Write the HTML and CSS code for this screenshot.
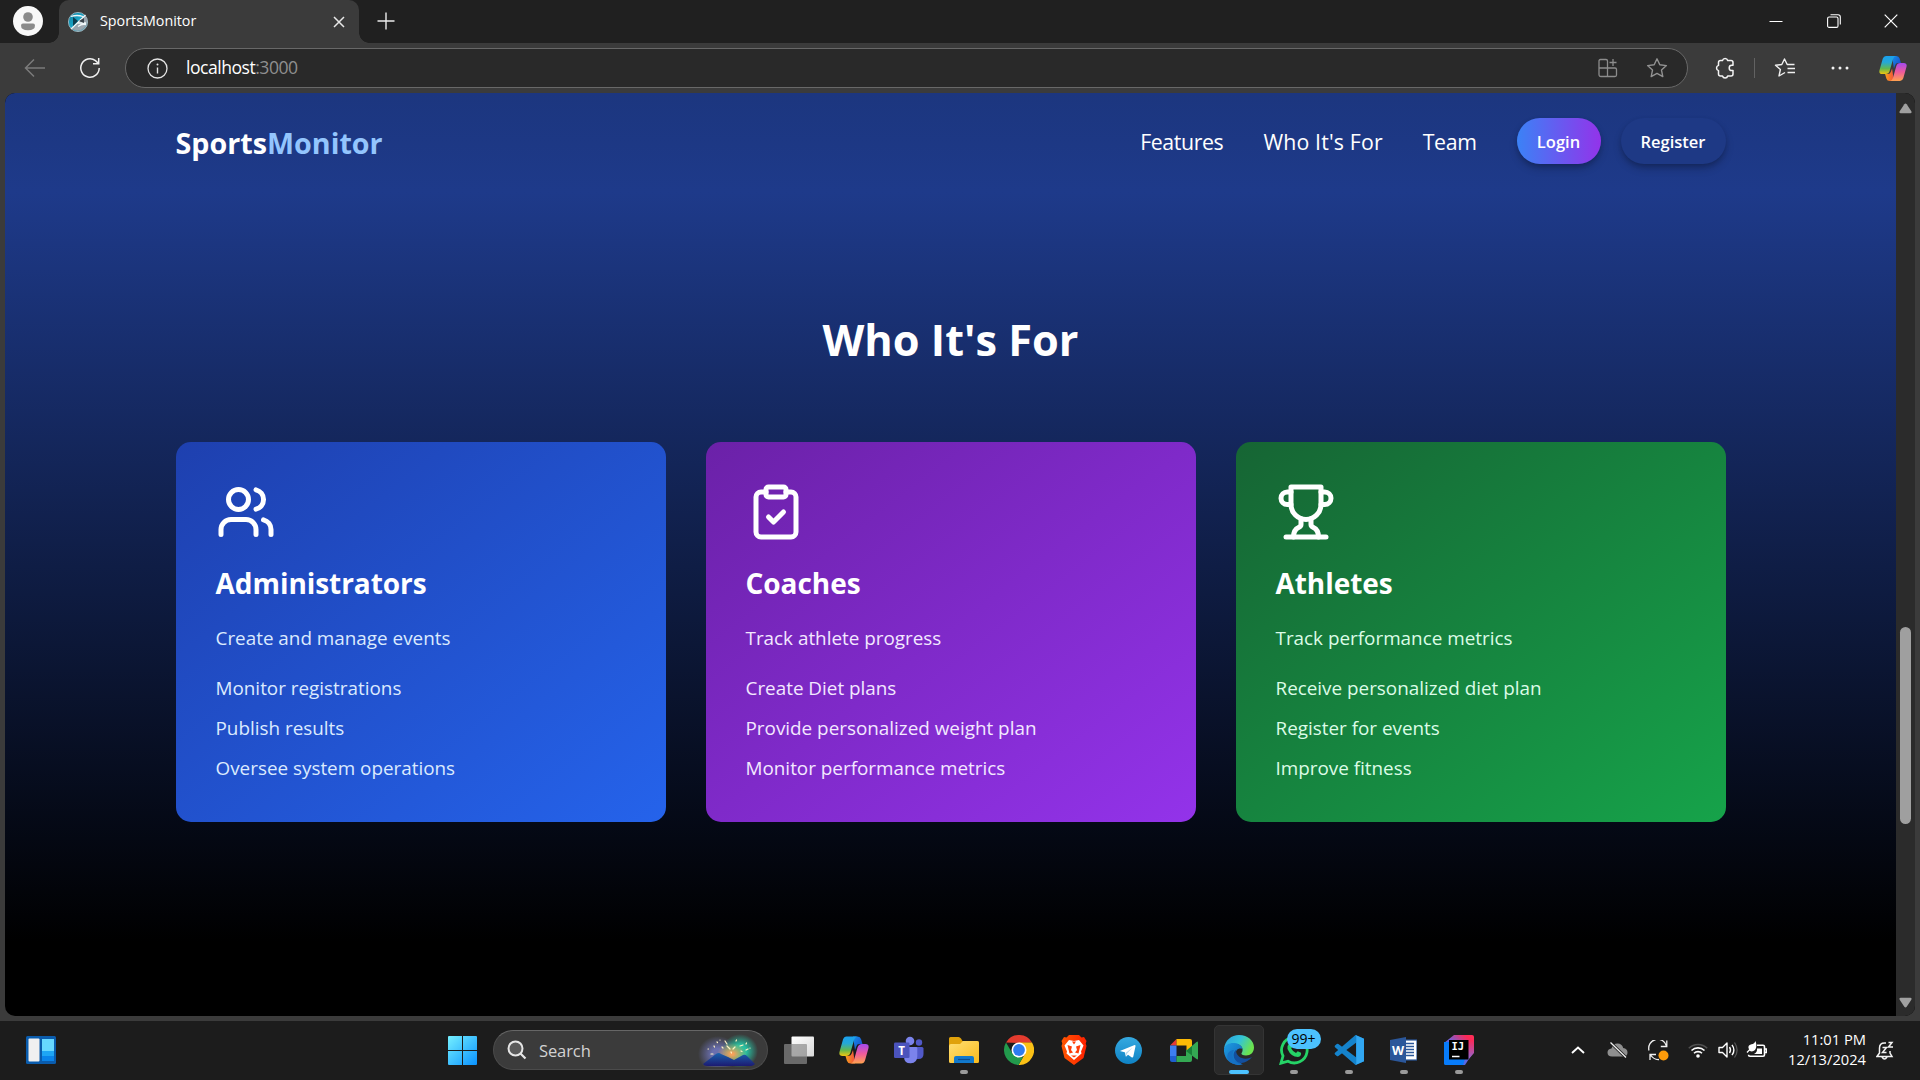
FILE: index.html
```html
<!DOCTYPE html>
<html lang="en">
<head>
<meta charset="utf-8">
<title>SportsMonitor</title>
<link rel="stylesheet" href="styles.css">
</head>
<body>
<svg class="defs" width="0" height="0" aria-hidden="true">
  <defs>
    <linearGradient id="cpA" x1="0" y1="0" x2="0" y2="1"><stop offset="0" stop-color="#1aa0ee"/><stop offset=".35" stop-color="#24a8d8"/><stop offset=".7" stop-color="#62b84e"/><stop offset="1" stop-color="#f2c70f"/></linearGradient>
    <linearGradient id="cpB" x1="0" y1="0" x2="0" y2="1"><stop offset="0" stop-color="#a349f0"/><stop offset=".5" stop-color="#ee5a9c"/><stop offset="1" stop-color="#ffa34e"/></linearGradient>
    <linearGradient id="cpC" x1="0" y1="0" x2="1" y2="1"><stop offset="0" stop-color="#1591ea"/><stop offset="1" stop-color="#1b3fc4"/></linearGradient>
    <linearGradient id="cpD" x1="0" y1="0" x2="1" y2="0"><stop offset="0" stop-color="#f9a11b"/><stop offset="1" stop-color="#f0503c"/></linearGradient>
    <linearGradient id="win" gradientUnits="userSpaceOnUse" x1="0" y1="0" x2="29" y2="29"><stop offset="0" stop-color="#75f0ff"/><stop offset="1" stop-color="#0a92ff"/></linearGradient>
    <linearGradient id="fold" x1="0" y1="0" x2="1" y2="1"><stop offset="0" stop-color="#ffdf74"/><stop offset="1" stop-color="#fabb1c"/></linearGradient>
    <linearGradient id="tg" x1="0" y1="0" x2="0" y2="1"><stop offset="0" stop-color="#36a9e0"/><stop offset="1" stop-color="#0f83c5"/></linearGradient>
    <linearGradient id="brv" x1="0" y1="0" x2="1" y2="0"><stop offset="0" stop-color="#ff5601"/><stop offset="1" stop-color="#ff2000"/></linearGradient>
    <linearGradient id="edA" x1="0" y1="0" x2="1" y2=".4"><stop offset="0" stop-color="#2b9fe0"/><stop offset=".55" stop-color="#33c4d8"/><stop offset="1" stop-color="#6be34f"/></linearGradient>
    <linearGradient id="edB" x1="0" y1="0" x2="1" y2="1"><stop offset="0" stop-color="#1d9de2"/><stop offset="1" stop-color="#115fb4"/></linearGradient>
    <linearGradient id="ij" x1="0" y1="1" x2="1" y2="0"><stop offset="0" stop-color="#087cfa"/><stop offset=".5" stop-color="#6f62dc"/><stop offset=".85" stop-color="#fe2857"/><stop offset="1" stop-color="#fe3157"/></linearGradient>
    <linearGradient id="ijr" x1="0" y1="0" x2="0" y2="1"><stop offset="0" stop-color="#fe2857"/><stop offset="1" stop-color="#8a6ad8"/></linearGradient>
    <linearGradient id="tv" x1="0" y1="0" x2="1" y2="1"><stop offset="0" stop-color="#fff"/><stop offset="1" stop-color="#d8d8d8"/></linearGradient>
    <radialGradient id="skyA"><stop offset=".3" stop-color="#6a6fae"/><stop offset="1" stop-color="#6a6fae" stop-opacity="0"/></radialGradient>
    <radialGradient id="skyB"><stop offset=".35" stop-color="#27c0a2"/><stop offset="1" stop-color="#27c0a2" stop-opacity="0"/></radialGradient>
    <radialGradient id="skyC"><stop offset=".1" stop-color="#f8a05a"/><stop offset="1" stop-color="#d8b04a" stop-opacity="0"/></radialGradient>
    <linearGradient id="mount" x1="0" y1="0" x2="0" y2="1"><stop offset="0" stop-color="#1a62ac"/><stop offset="1" stop-color="#1c1a72"/></linearGradient>
    <linearGradient id="fav" x1="0" y1="0" x2="1" y2="1"><stop offset="0" stop-color="#0f7fa0"/><stop offset=".45" stop-color="#1aa3c4"/><stop offset="1" stop-color="#8d99a4"/></linearGradient>
    <symbol id="copilot" viewBox="0 0 30 28">
      <path d="M14 .5h4.500q2.800 0 3.600 2.700L23.500 8h-3q-2.500 0-3.200 2.400L16 14z" fill="url(#cpC)"/>
      <path d="M16 27.500h-4.500q-2.800 0-3.600-2.700L6.500 20h3q2.500 0 3.200-2.400L14 14z" fill="url(#cpD)"/>
      <path d="M7.500.5H18q-2.200.6-3 3.500l-3.500 12.500Q10.500 20 7 20H3.500Q-.5 20 .6 15.500L4 3.500Q5 .5 7.500.5z" fill="url(#cpA)"/>
      <path d="M22.500 27.500H12q2.200-.6 3-3.500l3.500-12.500Q19.500 8 23 8h3.500q4 0 2.900 4.500L26 24.500q-1 3-3.500 3z" fill="url(#cpB)"/>
    </symbol>
  </defs>
</svg>

<div class="screen">
  <div class="tabbar">
    <svg class="avatar" width="30" height="30" viewBox="0 0 30 30"><circle cx="15" cy="15" r="15" fill="#f8f8f8"/><circle cx="15" cy="11" r="4.800" fill="#8a8a8a"/><path d="M8 19.500q0-2 2-2h10q2 0 2 2 0 4.800-7 4.800t-7-4.800z" fill="#8a8a8a"/></svg>
    <div class="tab">
      <svg width="20" height="20" viewBox="0 0 20 20"><circle cx="10" cy="10" r="9.600" fill="url(#fav)" stroke="#a9c4ce" stroke-width=".8"/><path d="M3.500 16.500 17 3a9 9 0 0 1-1 13q-6 5-12.500.5z" fill="#9aa5ae"/><path d="M3 17 17.500 3M9 11h9M10 14.500q4-3 8-2M3 4.500q6-2 12 0" stroke="#eef6f8" stroke-width="1.300" fill="none"/><path d="m5 5 5 4-5 5z" fill="#0d3e50"/><path d="m11 9 5-3v5z" fill="#3a444c"/></svg>
      <span class="tab-title">SportsMonitor</span>
      <svg class="tab-close" width="12" height="12" viewBox="0 0 12 12"><path d="m1 1 10 10M11 1 1 11" stroke="#e8e8e8" stroke-width="1.500"/></svg>
    </div>
    <svg class="newtab" width="18" height="18" viewBox="0 0 18 18"><path d="M9 .5v17M.5 9h17" stroke="#ececec" stroke-width="1.400"/></svg>
    <div class="winctl">
      <svg width="14" height="14" viewBox="0 0 14 14"><path d="M.5 7.500h13" stroke="#fff" stroke-width="1"/></svg>
      <svg width="14" height="14" viewBox="0 0 14 14"><rect x=".6" y="3" width="10.400" height="10.400" rx="1.500" fill="none" stroke="#fff" stroke-width="1.100"/><path d="M3.500.8H11q2.300 0 2.300 2.300v7.500" fill="none" stroke="#fff" stroke-width="1.100"/></svg>
      <svg width="14" height="14" viewBox="0 0 14 14"><path d="m.7.7 12.600 12.600M13.300.7.700 13.300" stroke="#fff" stroke-width="1.200"/></svg>
    </div>
  </div>

  <div class="toolbar">
    <svg class="back" width="22" height="20" viewBox="0 0 22 20"><path d="M21 10H1.500M10 1.500 1.500 10l8.500 8.500" fill="none" stroke="#7b7b7b" stroke-width="1.500"/></svg>
    <svg class="reload" width="22" height="22" viewBox="0 0 22 22"><path d="M20.200 11A9.200 9.200 0 1 1 16.500 3.600L19.500 6.500M19.700 1v5.800H14" fill="none" stroke="#f0f0f0" stroke-width="1.500"/></svg>
    <div class="address">
      <svg width="21" height="21" viewBox="0 0 21 21"><circle cx="10.500" cy="10.500" r="9.500" fill="none" stroke="#e4e4e4" stroke-width="1.300"/><path d="M10.500 9.500v6" stroke="#e4e4e4" stroke-width="1.400"/><circle cx="10.500" cy="6.500" r="1" fill="#e4e4e4"/></svg>
      <span class="url">localhost<span class="port">:3000</span></span>
      <svg class="apps" width="20" height="20" viewBox="0 0 20 20"><path d="M9.500 18.500H3q-2 0-2-2V3q0-1.500 1.500-1.500H8q1.500 0 1.500 1.500v15.500zM1 10h16q1.500 0 1.500 1.500V17q0 1.500-1.500 1.500H9.500M15 1v7M11.500 4.500h7" fill="none" stroke="#8c8c8c" stroke-width="1.300"/></svg>
      <svg width="22" height="22" viewBox="0 0 22 22"><path d="m11 1.800 2.800 6 6.600.8-4.900 4.500 1.300 6.500-5.800-3.200-5.800 3.200 1.300-6.500L1.600 8.600l6.600-.8z" fill="none" stroke="#929292" stroke-width="1.400" stroke-linejoin="round"/></svg>
    </div>
    <svg class="puzzle" width="20" height="22" viewBox="0 0 20 22"><path d="M5.500 3.500h2a2.700 2.700 0 0 1 5.200 0H16q2 0 2 2v2.800h-1.200a2.600 2.600 0 0 0 0 5.200H18V17q0 2-2 2h-3.300a2.700 2.700 0 0 1-5.200 0h-2q-2 0-2-2v-3.400a2.700 2.700 0 0 1 0-5.200V5.500q0-2 2-2z" fill="none" stroke="#f4f4f4" stroke-width="1.500" stroke-linejoin="round"/></svg>
    <i class="sep"></i>
    <svg width="22" height="22" viewBox="0 0 22 22"><path d="M11 15.500 5 19l1.400-6.500L1.500 8.300 7.800 7.500 10.500 2l2.700 5.500H20M13.500 11.500H21M13.500 15.500H21M14.500 7.500h6" fill="none" stroke="#f0f0f0" stroke-width="1.400" stroke-linejoin="round"/></svg>
    <svg class="dots" width="18" height="6" viewBox="0 0 18 6"><g fill="#f4f4f4"><circle cx="2" cy="3" r="1.500"/><circle cx="9" cy="3" r="1.500"/><circle cx="16" cy="3" r="1.500"/></g></svg>
    <svg class="cp" width="28" height="27"><use href="#copilot"/></svg>
  </div>

  <div class="viewport">
    <div class="page">
      <header class="site-head">
        <div class="container head-row">
          <div class="brand">Sports<span>Monitor</span></div>
          <nav class="nav">
            <a class="tight">Features</a><a class="loose">Who It's For</a><a class="tight">Team</a>
            <div class="buttons"><button class="btn login">Login</button><button class="btn register">Register</button></div>
          </nav>
        </div>
      </header>
      <section class="who">
        <h2>Who It's For</h2>
        <div class="container cards">
          <article class="card admin">
            <svg class="icon" viewBox="0 0 24 24"><path d="M16 21v-2a4 4 0 0 0-4-4H6a4 4 0 0 0-4 4v2"/><circle cx="9" cy="7" r="4"/><path d="M22 21v-2a4 4 0 0 0-3-3.870"/><path d="M16 3.130a4 4 0 0 1 0 7.750"/></svg>
            <h3>Administrators</h3>
            <p>Create and manage events</p>
            <ul><li>Monitor registrations</li><li>Publish results</li><li>Oversee system operations</li></ul>
          </article>
          <article class="card coach">
            <svg class="icon" viewBox="0 0 24 24"><rect x="8" y="2" width="8" height="4" rx="1"/><path d="M16 4h2a2 2 0 0 1 2 2v14a2 2 0 0 1-2 2H6a2 2 0 0 1-2-2V6a2 2 0 0 1 2-2h2"/><path d="m9 14 2 2 4-4"/></svg>
            <h3>Coaches</h3>
            <p>Track athlete progress</p>
            <ul><li>Create Diet plans</li><li>Provide personalized weight plan</li><li>Monitor performance metrics</li></ul>
          </article>
          <article class="card athlete">
            <svg class="icon" viewBox="0 0 24 24"><path d="M6 9H4.500a2.500 2.500 0 0 1 0-5H6"/><path d="M18 9h1.500a2.500 2.500 0 0 0 0-5H18"/><path d="M4 22h16"/><path d="M10 14.660V17c0 .55-.47.980-.97 1.210C7.850 18.750 7 20.240 7 22"/><path d="M14 14.660V17c0 .55.470.980.970 1.210C16.150 18.750 17 20.240 17 22"/><path d="M18 2H6v7a6 6 0 0 0 12 0V2Z"/></svg>
            <h3>Athletes</h3>
            <p>Track performance metrics</p>
            <ul><li>Receive personalized diet plan</li><li>Register for events</li><li>Improve fitness</li></ul>
          </article>
        </div>
      </section>
    </div>
    <div class="scrollbar">
      <svg width="13" height="11" viewBox="0 0 13 11"><path d="M5.300 1.200q1.200-1.400 2.400 0l4.600 7q.9 2-1 2H1.700q-1.900 0-1-2z" fill="#a0a0a0"/></svg>
      <i class="thumb"></i>
      <svg width="13" height="11" viewBox="0 0 13 11"><path d="M5.300 9.800q1.200 1.400 2.400 0l4.600-7q.9-2-1-2H1.700q-1.900 0-1 2z" fill="#a0a0a0"/></svg>
    </div>
  </div>

  <div class="taskbar">
    <svg class="widgets" width="30" height="28" viewBox="0 0 30 28"><rect width="30" height="28" rx="1.500" fill="#0a5cad"/><rect x="2.500" y="2.500" width="11" height="23" rx="1" fill="#f0f0f0"/><path d="M16 3h12v12H16z" fill="#67d8ff"/><path d="M16 15h12v5H16z" fill="#1ea6f5"/><path d="M16 20h12v5H16z" fill="#0a84ea"/></svg>
    <svg class="start" width="29" height="29" viewBox="0 0 29 29"><path d="M0 1q0-1 1-1h13v14H0zM15 0h13q1 0 1 1v13H15zM0 15h14v14H1q-1 0-1-1zM15 15h14v13q0 1-1 1H15z" fill="url(#win)"/></svg>
    <div class="search">
      <svg width="20" height="20" viewBox="0 0 20 20"><circle cx="8.500" cy="8.500" r="7" fill="#5a5a5a" stroke="#e6e6e6" stroke-width="2"/><path d="m13.500 13.500 5 5" stroke="#e6e6e6" stroke-width="2.200"/></svg>
      <span>Search</span>
      <svg class="art" width="60" height="34" viewBox="0 0 60 34"><ellipse cx="20" cy="21" rx="20" ry="18" fill="url(#skyA)"/><ellipse cx="42" cy="18" rx="18" ry="17" fill="url(#skyB)"/><ellipse cx="34" cy="21" rx="15" ry="11" fill="url(#skyC)"/><path d="M5 31 18 21q3-2 5 0l7 3 6 3 9-5q2-1 4 1l8 8q-2 2-4 2H9q-3 0-4-2z" fill="url(#mount)"/><g stroke="#fff3c4" stroke-width="1.200" stroke-linecap="round"><path d="m27 8 2 3M29 13l3 3M19 9l.5.500M16 13l.5 1M10 16h.5M13 21h2M35 16l2-2M42 13l3-1M48 11l.5-1M43 18l1 .5M48 17l2-1M52 15v.1M38 8l.5-1M24 14l1 1M33 19l.5 1M22 7v.1"/></g></svg>
    </div>
    <div class="apps-row">
      <div class="app"><svg width="30" height="28" viewBox="0 0 30 28"><rect x="7.500" y=".5" width="22.500" height="20" rx="1" fill="url(#tv)"/><rect x="0" y="8" width="23" height="20" rx="1" fill="#8a8a8a" fill-opacity=".7"/></svg></div>
      <div class="app"><svg width="30" height="28"><use href="#copilot"/></svg></div>
      <div class="app"><svg width="30" height="28" viewBox="0 0 30 28"><circle cx="25" cy="6.500" r="3.200" fill="#5159c8"/><path d="M20 11h8q1.500 0 1.500 1.500V18q0 5-5 5h-4.500z" fill="#5159c8"/><circle cx="16" cy="5" r="4.300" fill="#7b83eb"/><path d="M10 11h12q1.300 0 1.300 1.300V20q0 7-6.500 7.300T10 21z" fill="#7b83eb"/><rect y="6.500" width="15.500" height="15.500" rx="1.300" fill="#4b53bc"/><text x="7.700" y="18.500" class="glyph-t">T</text></svg></div>
      <div class="app"><svg width="30" height="28" viewBox="0 0 30 28"><path d="M0 2.500Q0 1 1.500 1h8q1.500 0 2.500 1.500L13.500 5H28q2 0 2 2v5H0z" fill="#e0a20b"/><path d="M0 10q0-2 2-2h9l3-3h14q2 0 2 2v18.500q0 1.500-1.500 1.500h-27Q0 27 0 25.500z" fill="url(#fold)"/><path d="M5 27v-5q0-2 2-2h16q2 0 2 2v5z" fill="#1279cc"/><path d="M9 23.500h12" stroke="#0b4d8f" stroke-width="1.200"/></svg><i class="dot"></i></div>
      <div class="app"><svg width="30" height="30" viewBox="0 0 30 30"><path d="M2 7.500a15 15 0 0 1 26 0L15 8z" fill="#e33b2e"/><path d="M28 7.500A15 15 0 0 1 14.500 30l6.700-11.500L15 7.500z" fill="#fbc116"/><path d="M2 7.500 8.600 18.700l6.400 3.500h4L14.500 30A15 15 0 0 1 2 7.500z" fill="#229a4c"/><circle cx="15" cy="15" r="7.500" fill="#fff"/><circle cx="15" cy="15" r="5.900" fill="#2f7cf0"/></svg></div>
      <div class="app"><svg width="26" height="30" viewBox="0 0 26 30"><path d="M8 0h10l2.500 2.500L23 2l2.500 4-.8 2.500.8 2.500-3 12L13 30 3.500 23l-3-12 .8-2.500L.5 6 3 2l2.500.5z" fill="url(#brv)"/><path d="m8 5 5 1 5-1 4.500 5.500-2.500 6 .5 2-3.500 3L13 25l-4-3.500-3.500-3 .5-2-2.500-6z" fill="#fff"/><path d="m6.500 10 4.500 1.500L10 15l2 2.500-3.500 1M19.500 10 15 11.500l1 3.500-2 2.500 3.500 1M10 20.500h6l-3 2zM11 6.500l2 3 2-3" fill="#ff3d08"/></svg></div>
      <div class="app"><svg width="27" height="27" viewBox="0 0 27 27"><circle cx="13.500" cy="13.500" r="13.500" fill="url(#tg)"/><path d="M5.500 13.800 19 8.200q1.700-.6 1.500 1L18.300 19.500q-.4 1.600-1.800.7l-3.500-2.500-1.800 1.800q-.5.500-.6-1l-.8-3.200-4-1.100q-1.300-.2-.3-.4z" fill="#fff"/><path d="m10.500 16 6.800-5.200-5.300 6-.9 2.200z" fill="#b7d9ec"/></svg></div>
      <div class="app"><svg width="28" height="23" viewBox="0 0 28 23"><path d="M0 6.500 6.500 0v6.500z" fill="#e53935"/><path d="M6.500 0H20q2 0 2 2v9l-5.500 1V6.500h-10z" fill="#fdba05"/><path d="M0 6.500h6.500V17H0z" fill="#3d7df0"/><path d="M0 17h6.500v6H2q-2 0-2-2z" fill="#1f5fd0"/><path d="M6.500 17H16v-6h6v10q0 2-2 2H6.500z" fill="#34a853"/><path d="M16 12l10.500-9Q28 2 28 3.500v16q0 1.500-1.500.5z" fill="#34a853"/><path d="M16 12l6-5v9.500z" fill="#188038"/></svg></div>
      <div class="app active"><svg width="30" height="30" viewBox="0 0 30 30"><path d="M0 14C1 5 7.500 0 15 0c9 0 15 6 15 12.500 0 5-3.500 8-8 8-3.500 0-5-1.300-4.500-2.200 2.500-3 1-9.300-6-9.300C5.500 9 1 12 0 14z" fill="url(#edA)"/><path d="M0 14c1-4.500 6-6.500 10.500-6 5 .5 8 4 8 6-6-2-8.500 4-5.500 9 2.500 4.500 5 6 6 6.500C8 32-.8 24.500 0 14z" fill="url(#edB)"/><path d="M12.500 14.500c-3.500 2-4 8-.2 11.500 4.500 4 11.200 1.500 15.700-4-4.500 2.500-10 2-13-.5-2.500-2-3.500-5-2.500-7z" fill="#134f9e"/><path d="M10 15c-3 5-1.500 13 7.500 14.800-5 .8-11-1-14-6.300C2.500 18 6 15 10 15z" fill="#1671c4"/></svg><i class="dot"></i></div>
      <div class="app"><svg width="30" height="30" viewBox="0 0 30 30"><path d="M2 28.200 4 21A12.800 12.800 0 1 1 9 26.200z" fill="none" stroke="#25d366" stroke-width="2.800"/><path d="M10 8.500q1-1 2 0l1.500 3-1.300 2q1.800 3.300 4.800 4.500l1.700-1.800 3.300 1.600q.7 3.500-3 4.200Q12 22 8.500 14q-.5-3.500 1.500-5.500z" fill="#25d366"/></svg><span class="badge">99+</span><i class="dot"></i></div>
      <div class="app"><svg width="30" height="30" viewBox="0 0 30 30"><path d="M21.500 0 30 3.800V26.200L21.500 30 1 12.200q-.8-.8 0-1.600L2.800 9q.8-.6 1.600 0L22 22.200V7.800L4.400 21q-.8.600-1.600 0L1 19.400q-.8-.8 0-1.600z" fill="#1583cc"/><path d="M21.500 0 30 3.800V26.200L21.500 30q.8-.5.800-2V2q0-1.500-.8-2z" fill="#31a7f2"/></svg><i class="dot"></i></div>
      <div class="app"><svg width="27" height="26" viewBox="0 0 27 26"><rect x="15" y="3" width="12" height="20" fill="#fff" stroke="#2b579a" stroke-width="1.200"/><path d="M16 6.500h8M16 9.500h8M16 12.500h8M16 15.500h8M16 18.500h8" stroke="#2b579a" stroke-width="1.300"/><path d="M0 3 16 0v26L0 23z" fill="#2b579a"/><text x="8" y="17.500" class="glyph-w">W</text></svg><i class="dot"></i></div>
      <div class="app"><svg width="30" height="30" viewBox="0 0 30 30"><path d="M0 8 10 0h18q2 0 2 2v14l-9 14H2q-2 0-2-2z" fill="url(#ij)"/><path d="M24 5h6v13l-6 7z" fill="url(#ijr)"/><path d="M0 7h6v17h15l-2 6H2q-2 0-2-2z" fill="#087cfa"/><rect x="5" y="5" width="19.500" height="19.500"/><text x="7.500" y="15" class="glyph-ij">IJ</text><path d="M8 21.500h7.500" stroke="#fff" stroke-width="1.500"/></svg><i class="dot"></i></div>
    </div>
    <div class="tray">
      <svg width="14" height="8" viewBox="0 0 14 8"><path d="m1 7 6-5.500L13 7" fill="none" stroke="#fff" stroke-width="1.900"/></svg>
      <svg width="21" height="16" viewBox="0 0 21 16"><path d="M5 14.500q-4.500 0-4.500-4 0-3.500 4-4Q6 1.500 10.500 1.500T16.200 6q4.300.5 4.300 4.500 0 4-4 4z" fill="#8f8f8f"/><path d="m3.500.5 15.500 15" stroke="#1c1c1c" stroke-width="3"/><path d="m3.500.5 15.500 15" stroke="#f0f0f0" stroke-width="1.300"/></svg>
      <svg width="21" height="21" viewBox="0 0 21 21"><path d="M1 10.500A9 9 0 0 1 18.500 6M18.800.5V6.500h-6M11 19.500q-5 .5-8.500-4.500M2 20v-5.500h6" fill="none" stroke="#f0f0f0" stroke-width="1.300"/><circle cx="15.500" cy="15.500" r="5" fill="#ff9c0a"/></svg>
      <svg width="20" height="16" viewBox="0 0 20 16"><g fill="none" stroke-width="1.600"><path d="M.8 6.300a13 13 0 0 1 18.400 0" stroke="#505050"/><path d="M3.500 8.500a9.300 9.300 0 0 1 13 0M6 11.300a5.700 5.700 0 0 1 8 0" stroke="#fff"/></g><circle cx="10" cy="14" r="1.800" fill="#fff"/></svg>
      <svg width="21" height="18" viewBox="0 0 21 18"><path d="M1 6.500h3.500L9 2v14l-4.500-4.500H1z" fill="none" stroke="#fff" stroke-width="1.400" stroke-linejoin="round"/><path d="M11.500 6q2 3 0 6M14 3.800q3.800 5.200 0 10.400" fill="none" stroke="#fff" stroke-width="1.400"/><path d="M16.500 1.500q5.200 7.500 0 15" fill="none" stroke="#555" stroke-width="1.300"/></svg>
      <svg width="21" height="18" viewBox="0 0 21 18"><path d="M11 4.200h6q1.500 0 1.500 1.500v8q0 1.500-1.500 1.500H4q-1.500 0-1.500-1.500M19 8h1.500v3.500H19" fill="none" stroke="#fff" stroke-width="1.600"/><path d="M9.500 0q2 6-.5 9-2.500 2.300-5.500.8L1.500 12l-1-1L3 8.500Q1 4 5.500 3.200 8.500 3 9.500 0zM11 7.500h5v5.500H8q3.500-2 3-5.500z" fill="#fff"/></svg>
      <div class="clock"><span>11:01 PM</span><span>12/13/2024</span></div>
      <svg class="bell" width="19" height="19" viewBox="0 0 19 19"><path d="M10 2H8.500Q3.500 2 3.500 7v5L1 15.500h15L14 12v-2M6 16q2.500 4 5 0M6.500 6.500h4l-4 5h4M12.500 1.500H16l-3.500 4.500H17" fill="none" stroke="#f4f4f4" stroke-width="1.500"/></svg>
    </div>
  </div>
</div>
</body>
</html>
```
FILE: styles.css
```css
* { box-sizing: border-box; }
body { margin: 0; background: #1c1c1c; font-family: "Open Sans", "Noto Sans", sans-serif; color: #fff; overflow: hidden; }
svg { display: block; flex: none; }
.defs { position: absolute; }
.screen { width: 1920px; height: 1080px; display: flex; flex-direction: column; background: #3b3b3b; }

/* Browser tab strip */
.tabbar { height: 43px; flex: none; display: flex; background: #202020; }
.avatar { margin: 6px 0 0 13px; }
.tab { position: relative; width: 300px; height: 43px; margin-left: 16px; padding: 0 14px 0 9px; display: flex; align-items: center; background: #3b3b3b; border-radius: 10px 10px 0 0; }
.tab::before, .tab::after { content: ""; position: absolute; bottom: 0; width: 10px; height: 10px; }
.tab::before { left: -10px; background: radial-gradient(circle at 0 0, transparent 9.500px, #3b3b3b 10px); }
.tab::after { right: -10px; background: radial-gradient(circle at 100% 0, transparent 9.500px, #3b3b3b 10px); }
.tab-title { margin-left: 12px; font-size: 14.300px; line-height: 20px; margin-top: -2px; }
.tab-close { margin-left: auto; }
.newtab { margin: 12px 0 0 18px; }
.winctl { margin: 14px 22px 0 auto; display: flex; gap: 43.500px; }

/* Address row */
.toolbar { height: 50px; flex: none; display: flex; align-items: center; padding: 0 13px 0 24px; }
.reload { margin-left: 33px; }
.address { width: 1563px; height: 40px; margin-left: 24px; padding: 0 19px 0 21px; display: flex; align-items: center; background: #292929; border: 1px solid #686868; border-radius: 20px; }
.url { margin-left: 18px; padding-bottom: 2px; font-size: 17.600px; letter-spacing: -.5px; }
.port { color: #8f8f8f; }
.apps { margin-left: auto; margin-right: 28px; }
.puzzle { margin-left: 27px; }
.sep { width: 1px; height: 20px; background: #626262; margin: 0 19px; }
.dots { margin-left: 35px; }
.cp { margin-left: auto; }

/* Page viewport */
.viewport { width: 1910px; height: 923px; flex: none; margin-left: 5px; display: flex; border-radius: 10px; overflow: hidden; background: #000; }
.page { width: 1891px; }
.container { width: 1550px; margin: 0 auto; }
.site-head { height: 99px; background: linear-gradient(#1c367f, #1e3a8a); }
.head-row { height: 96px; display: flex; align-items: center; justify-content: space-between; }
.brand { padding-top: 2px; font-size: 28.700px; font-weight: 700; }
.brand span { color: #93c5fd; }
.nav { display: flex; align-items: center; gap: 40px; font-size: 21.300px; }
.tight { letter-spacing: -.38px; }
.loose { letter-spacing: .16px; }
.buttons { display: flex; gap: 20px; }
.btn { height: 46px; padding: 0; border: 0; border-radius: 23px; color: #fff; font: 600 16.500px "Open Sans", sans-serif; box-shadow: 0 5px 8px -1px rgba(0,0,0,.25), 0 2px 5px -1px rgba(0,0,0,.15); }
.login { width: 84px; background: linear-gradient(90deg, #3b82f6, #9333ea); }
.register { width: 105px; background: #1e3985; }
.who { height: 750px; padding-top: 123px; background: linear-gradient(#1e3a8a, #000); }
.who h2 { margin: 0 0 77px; text-align: center; font-size: 43.300px; line-height: 50px; font-weight: 700; }
.cards { display: grid; grid-template-columns: repeat(3, 490px); gap: 40px; }
.card { height: 380px; padding: 40px; border-radius: 15px; font-size: 18.880px; line-height: 30px; }
.admin { background: linear-gradient(to bottom right, #1e40af, #2563eb); color: #dbeafe; }
.coach { background: linear-gradient(to bottom right, #6b21a8, #9333ea); color: #f3e8ff; }
.athlete { background: linear-gradient(to bottom right, #166534, #16a34a); color: #dcfce7; }
.icon { width: 60px; height: 60px; margin-bottom: 21px; fill: none; stroke: #fff; stroke-width: 2; stroke-linecap: round; stroke-linejoin: round; }
.card h3 { margin: 0 0 20px; color: #fff; font-size: 28px; line-height: 40px; font-weight: 700; letter-spacing: -.05px; }
.card p { margin: 0 0 20px; }
.card ul { margin: 0; padding: 0; list-style: none; display: grid; gap: 10px; }

.scrollbar { width: 19px; background: #2b2b2b; padding: 10px 0 8px; display: flex; flex-direction: column; align-items: center; justify-content: space-between; }
.thumb { width: 11px; height: 197px; border-radius: 6px; background: #9f9f9f; margin-top: 340px; }

/* Taskbar */
.taskbar { height: 59px; margin-top: 5px; flex: none; display: flex; align-items: center; background: #1c1c1c; padding: 0 25px 1px 26px; }
.start { margin-left: 392px; }
.search { width: 275px; height: 40px; margin-left: 16px; padding: 0 9px 0 13px; display: flex; align-items: center; background: #3b3b3b; border: 1px solid #4b4b4b; border-top-color: #666; border-radius: 20px; font-size: 16.500px; color: #d2d2d2; }
.search span { margin-left: 12px; letter-spacing: -.1px; }
.art { margin-left: auto; }
.apps-row { display: flex; margin-left: 3px; }
.app { position: relative; width: 55px; height: 50px; display: flex; align-items: center; justify-content: center; }
.app.active { width: 50px; margin: 0 2.500px; background: #2a2a2a; border: 1px solid #343434; border-radius: 5px; }
.dot { position: absolute; bottom: 1px; left: 50%; width: 8px; height: 4px; margin-left: -4px; border-radius: 2px; background: #9a9a9a; }
.active .dot { bottom: 0; width: 20px; margin-left: -10px; background: #4cc2ff; }
.badge { position: absolute; left: 20.500px; top: 4px; width: 34px; height: 20px; border-radius: 10px; background: #4cc2ff; color: #000; font-size: 14px; line-height: 19px; text-align: center; }
.glyph-t { font: 700 11.500px "Open Sans", sans-serif; fill: #fff; text-anchor: middle; }
.glyph-w { font: 700 12.500px "Open Sans", sans-serif; fill: #fff; text-anchor: middle; }
.glyph-ij { font: 700 10.500px "DejaVu Sans Mono", monospace; fill: #fff; }
.tray { margin-left: auto; display: flex; align-items: center; }
.tray svg:nth-child(2) { margin-left: 22px; }
.tray svg:nth-child(3) { margin-left: 19.500px; }
.tray svg:nth-child(4) { margin-left: 19.500px; }
.tray svg:nth-child(5) { margin-left: 10px; }
.tray svg:nth-child(6) { margin-left: 7px; }
.clock { width: 99px; padding-bottom: 2px; display: grid; justify-items: end; font-size: 14.700px; line-height: 20px; }
.tray .bell { margin-left: 10px; }
```
